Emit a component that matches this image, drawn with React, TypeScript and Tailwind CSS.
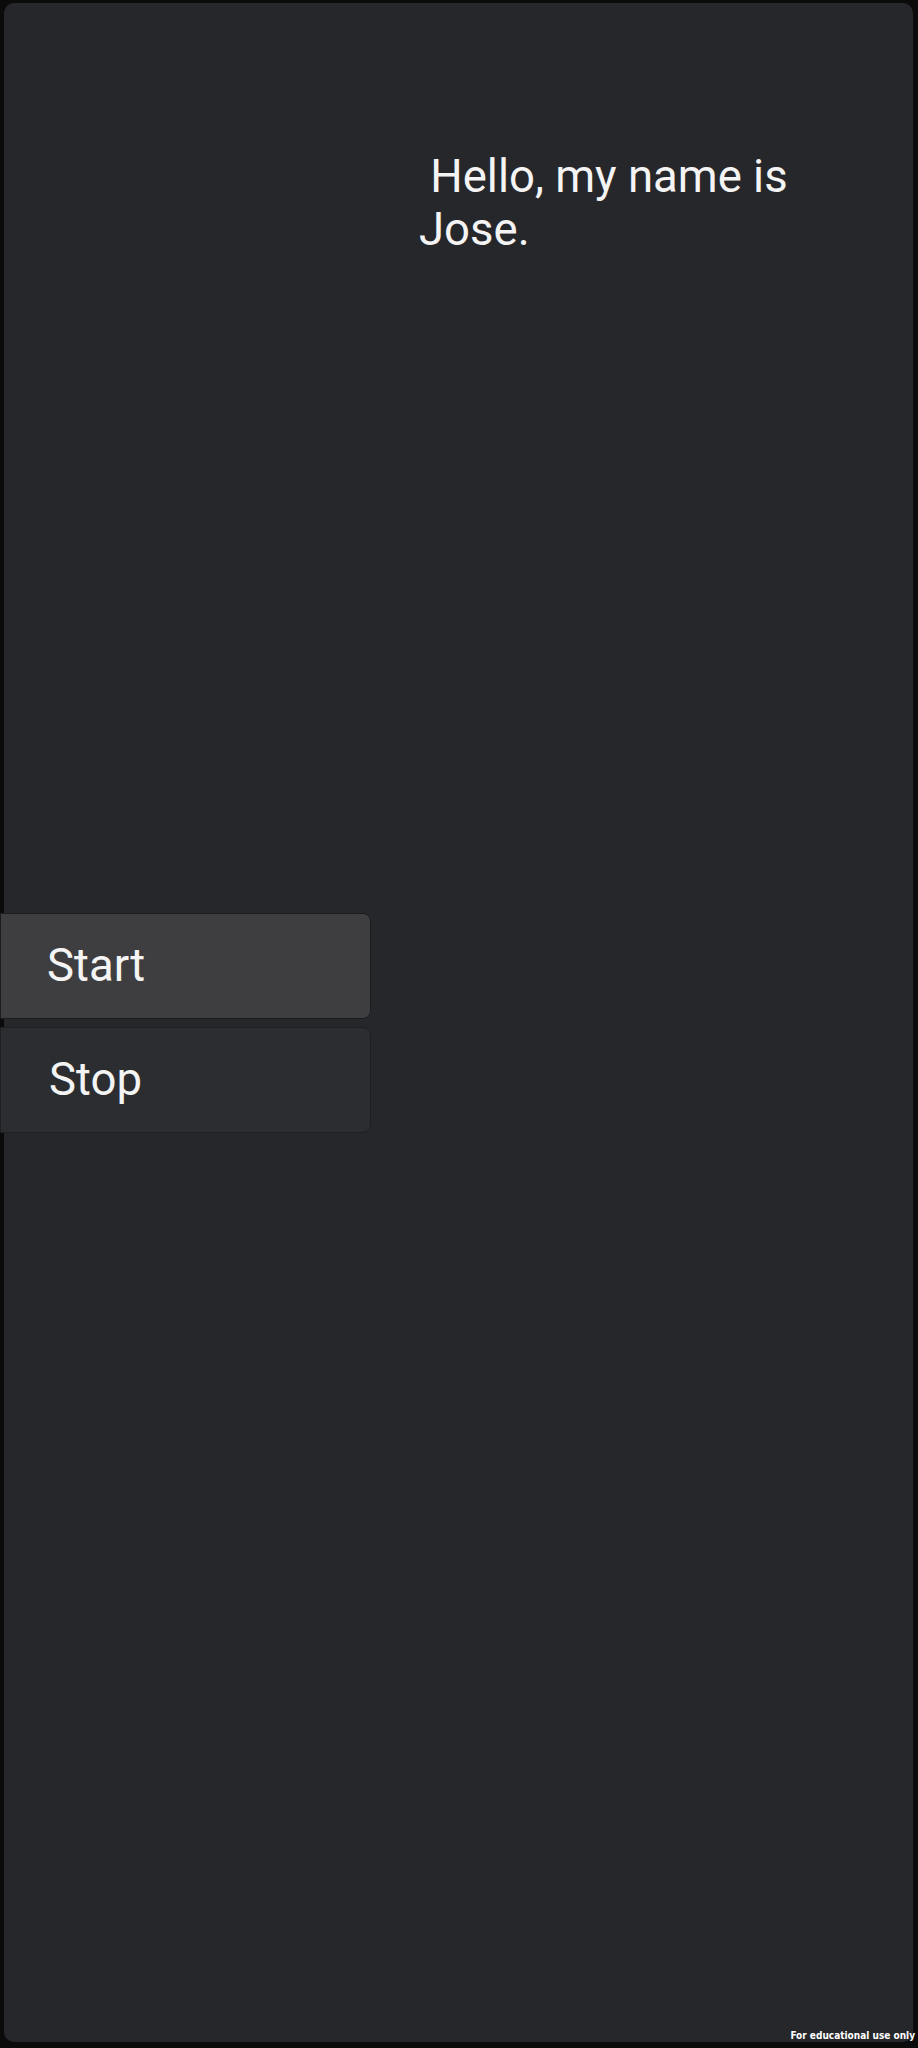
export default function App() {
	return (
		<div className="relative w-[918px] h-[2048px] bg-[#0b0b0c] pt-[3px] pl-[4px] pr-[5px] pb-[6px] font-['Roboto',sans-serif]">
			<div className="h-full rounded-[10px] bg-[#26272b] flex flex-col">
				<p className="mt-[147px] ml-[415px] w-[460px] text-[45.5px] leading-[53px] text-[#f4f4f4]">
					&nbsp;Hello, my name is Jose.
				</p>

				<div className="mt-[657px] -ml-[4px] w-[371px] flex flex-col gap-[8px]">
					<button className="h-[106px] rounded-r-[8px] border border-[#1b1c1e] bg-[#3e3e40] pl-[46px] text-left text-[45.5px] text-[#f4f4f4]">
						Start
					</button>
					<button className="h-[106px] rounded-r-[8px] border border-[#1e1f22] bg-[#2c2d30] pl-[48px] text-left text-[45.5px] text-[#f4f4f4]">
						Stop
					</button>
				</div>
			</div>

			<span className="absolute right-[3px] bottom-[7px] font-['DejaVu_Sans_Condensed','DejaVu_Sans',sans-serif] font-bold text-[10px] leading-none text-white">
				For educational use only
			</span>
		</div>
	);
}
